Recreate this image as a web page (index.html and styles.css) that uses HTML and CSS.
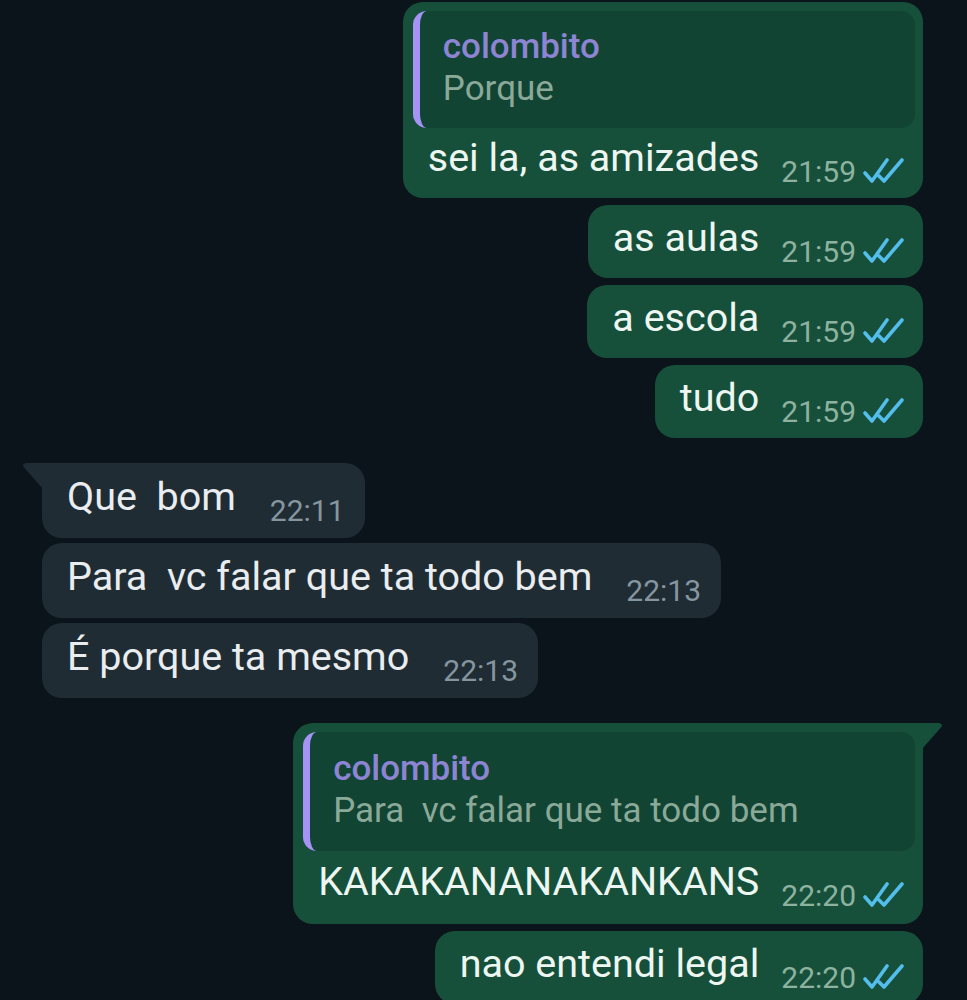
FILE: index.html
```html
<!DOCTYPE html>
<html lang="pt">
<head>
<meta charset="utf-8">
<title>Chat</title>
<link rel="stylesheet" href="styles.css">
</head>
<body>
<div class="chat">
  <div class="msg out">
    <div class="bubble">
      <div class="quote"><div class="q-name">colombito</div><div class="q-text">Porque</div></div>
      <div class="row"><span class="text">sei la, as amizades</span><span class="meta"><span class="time">21:59</span><svg class="ticks" viewBox="0 0 42 26" width="42" height="26"><path d="M2 15 L9 23 L24 2 M16 18 L21 23 L39 2"/></svg></span></div>
    </div>
  </div>
  <div class="msg out">
    <div class="bubble">
      <div class="row"><span class="text">as aulas</span><span class="meta"><span class="time">21:59</span><svg class="ticks" viewBox="0 0 42 26" width="42" height="26"><path d="M2 15 L9 23 L24 2 M16 18 L21 23 L39 2"/></svg></span></div>
    </div>
  </div>
  <div class="msg out">
    <div class="bubble">
      <div class="row"><span class="text">a escola</span><span class="meta"><span class="time">21:59</span><svg class="ticks" viewBox="0 0 42 26" width="42" height="26"><path d="M2 15 L9 23 L24 2 M16 18 L21 23 L39 2"/></svg></span></div>
    </div>
  </div>
  <div class="msg out">
    <div class="bubble">
      <div class="row"><span class="text">tudo</span><span class="meta"><span class="time">21:59</span><svg class="ticks" viewBox="0 0 42 26" width="42" height="26"><path d="M2 15 L9 23 L24 2 M16 18 L21 23 L39 2"/></svg></span></div>
    </div>
  </div>

  <div class="msg in group-start">
    <div class="bubble tail-in">
      <div class="row"><span class="text">Que  bom</span><span class="meta"><span class="time">22:11</span></span></div>
    </div>
  </div>
  <div class="msg in">
    <div class="bubble">
      <div class="row"><span class="text">Para  vc falar que ta todo bem</span><span class="meta"><span class="time">22:13</span></span></div>
    </div>
  </div>
  <div class="msg in">
    <div class="bubble">
      <div class="row"><span class="text">É porque ta mesmo</span><span class="meta"><span class="time">22:13</span></span></div>
    </div>
  </div>

  <div class="msg out group-start">
    <div class="bubble tail-out">
      <div class="quote"><div class="q-name">colombito</div><div class="q-text">Para  vc falar que ta todo bem</div></div>
      <div class="row"><span class="text">KAKAKANANAKANKANS</span><span class="meta"><span class="time">22:20</span><svg class="ticks" viewBox="0 0 42 26" width="42" height="26"><path d="M2 15 L9 23 L24 2 M16 18 L21 23 L39 2"/></svg></span></div>
    </div>
  </div>
  <div class="msg out">
    <div class="bubble">
      <div class="row"><span class="text">nao entendi legal</span><span class="meta"><span class="time">22:20</span><svg class="ticks" viewBox="0 0 42 26" width="42" height="26"><path d="M2 15 L9 23 L24 2 M16 18 L21 23 L39 2"/></svg></span></div>
    </div>
  </div>
</div>
</body>
</html>
```

FILE: styles.css
```css
html, body {
  margin: 0;
  padding: 0;
  height: 100%;
  overflow: hidden;
  background: #0b141a;
}

body {
  font-family: Roboto, "Noto Sans", "Liberation Sans", sans-serif;
}

.chat {
  display: flex;
  flex-direction: column;
  gap: 7px;
  padding: 2px 44px 0 42px;
}

.msg {
  display: flex;
}

.msg.out {
  align-self: flex-end;
}

.msg.in {
  align-self: flex-start;
}

.msg.in + .msg.in {
  margin-top: -2px;
}

.group-start {
  margin-top: 18px;
}

.bubble {
  position: relative;
  border-radius: 20px;
  padding: 9px 20px 11px 25px;
}

.out .bubble {
  background: #16503a;
  color: #edf6f1;
}

.in .bubble {
  background: #202c33;
  color: #e9edef;
  padding: 10px 20px 12px 25px;
}

.row {
  display: flex;
  align-items: flex-end;
}

.text {
  font-size: 39.5px;
  line-height: 47px;
  margin-bottom: 6px;
  white-space: pre;
}

.meta {
  display: flex;
  align-items: flex-end;
  margin-left: 22px;
  height: 30px;
}

.in .meta {
  margin-left: 34px;
}

.time {
  font-size: 30px;
  line-height: 30px;
}

.out .time {
  color: #8db3a0;
}

.in .time {
  color: #8696a0;
}

.ticks {
  margin-left: 7px;
  margin-right: -2px;
  margin-bottom: 3px;
  fill: none;
  stroke: #53bdeb;
  stroke-width: 3.6;
  stroke-linecap: round;
  stroke-linejoin: round;
}

.quote {
  margin: 0 -12px 6px -15px;
  background: #124433;
  border-left: 7px solid #a594f6;
  border-radius: 14px;
  padding: 15px 20px 18px 23px;
}

.q-name,
.q-text {
  font-size: 35px;
  line-height: 42px;
  white-space: pre;
}

.q-name {
  color: #8d84d4;
  font-weight: 500;
}

.q-text {
  color: #8aa998;
}

.tail-out {
  border-top-right-radius: 0;
  padding-bottom: 13px;
}

.tail-out .quote {
  padding-top: 16px;
  padding-bottom: 19px;
  margin-bottom: 7px;
}

.tail-out::after {
  content: "";
  position: absolute;
  top: 0;
  right: -19px;
  width: 20px;
  height: 26px;
  background: #16503a;
  clip-path: polygon(0 0, 85% 0, 100% 6%, 98% 14%, 0 100%);
}

.tail-in {
  border-top-left-radius: 0;
}

.tail-in::before {
  content: "";
  position: absolute;
  top: 0;
  left: -19px;
  width: 20px;
  height: 26px;
  background: #202c33;
  clip-path: polygon(15% 0, 100% 0, 100% 100%, 2% 14%, 0 6%);
}
```
